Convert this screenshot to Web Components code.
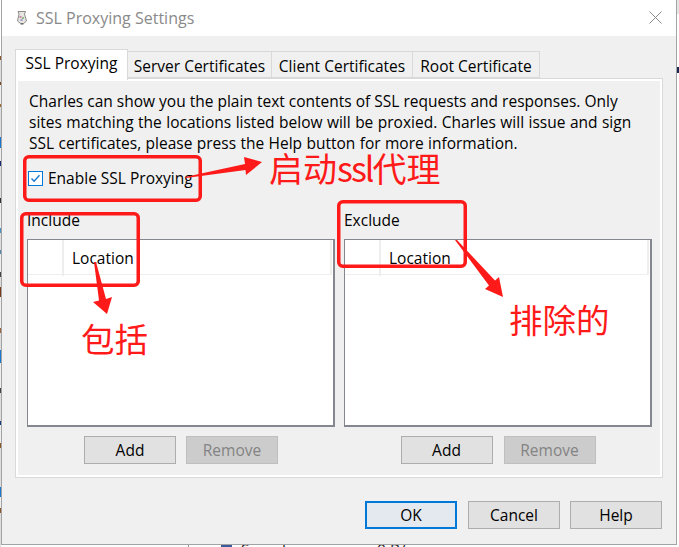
<!DOCTYPE html>
<html>
<head>
<meta charset="utf-8">
<title>SSL Proxying Settings</title>
<style>
    html, body { margin: 0; padding: 0; background: #fff; }
    body {
        position: relative;
        width: 679px;
        height: 547px;
        overflow: hidden;
        font-family: "Open Sans", "Noto Sans", sans-serif;
        font-size: 15.5px;
        color: #000;
    }
</style>
</head>
<body>
<ssl-backdrop></ssl-backdrop>
<ssl-dialog title-text="SSL Proxying Settings">
    <ssl-tabs>
        <ssl-tab slot="tabs" active style="width:113px">SSL Proxying</ssl-tab>
        <ssl-tab slot="tabs" style="width:144px">Server Certificates</ssl-tab>
        <ssl-tab slot="tabs" style="width:141px">Client Certificates</ssl-tab>
        <ssl-tab slot="tabs" style="width:127px">Root Certificate</ssl-tab>
        <ssl-proxy-panel></ssl-proxy-panel>
    </ssl-tabs>
    <ssl-button slot="footer" primary style="margin-right:1px">OK</ssl-button>
    <ssl-button slot="footer">Cancel</ssl-button>
    <ssl-button slot="footer">Help</ssl-button>
</ssl-dialog>
<ssl-markup></ssl-markup>

<script>
// what shows of the main window around the dialog
var templateBackdrop = document.createElement('template')
templateBackdrop.innerHTML = `
<style>
    :host {
        position: absolute;
        inset: 0;
        display: block;
    }
    #strip {
        position: absolute;
        left: 0;
        top: 0;
        width: 1px;
        height: 547px;
        background: linear-gradient(#fff 0 56px, #8a5a2a 56px 60px, #ddd 60px 82px, #7a4a20 82px 85px, #eee 85px 104px, #a06a30 104px 107px, #ddd 107px 137px, #1a78d0 137px 148px, #eee 148px 161px, #1a2a70 161px 166px, #ddd 166px 198px, #333 198px 203px, #eee 203px 228px, #4a90c0 228px 233px, #ddd 233px 250px, #58a 250px 254px, #eee 254px 272px, #444 272px 277px, #ddd 277px 287px, #7a3a1a 287px 297px, #eee 297px 328px, #964 328px 333px, #ddd 333px 350px, #1a78d0 350px 363px, #eee 363px 388px, #444 388px 393px, #ddd 393px 421px, #1a3a80 421px 425px, #eee 425px 443px, #8a5a2a 443px 448px, #ddd 448px 487px, #1a78d0 487px 497px, #eee 497px 508px, #8a5a2a 508px 513px, #ddd 513px);
    }
    #edge {
        position: absolute;
        right: 0;
        top: 0;
        width: 2px;
        height: 547px;
        background: linear-gradient(#e4e4e4 0 14px, #fff 14px 67px, #1a2a50 67px 73px, #fff 73px);
    }
    #under {
        position: absolute;
        left: 0;
        top: 539px;
        width: 679px;
        height: 8px;
        overflow: hidden;
        color: #222;
    }
    span, i { position: absolute; top: 0; }
    i { width: 1px; height: 8px; background: #999; }
    b { position: absolute; left: 221px; top: 0; width: 11px; height: 8px; background: #3a5a9a; }
</style>
<div id="strip"></div>
<div id="edge"></div>
<div id="under">
    <i style="left:188px"></i>
    <b></b>
    <span style="left:241px">Speed</span>
    <span style="left:377px">0 B/s</span>
</div>
`

class SslBackdrop extends HTMLElement {
    constructor() {
        super()
        this.shadow = this.attachShadow({ mode: 'open' })
        this.shadow.appendChild(templateBackdrop.content.cloneNode(true))
    }
}

var templateDialog = document.createElement('template')
templateDialog.innerHTML = `
<style>
    :host {
        position: relative;
        display: flex;
        flex-direction: column;
        box-sizing: border-box;
        width: 676px;
        height: 545px;
        margin-left: 1px;
        background: #f0f0f0;
        border: solid #a3a3a3;
        border-width: 0 1px 1px 1px;
    }
    #bar {
        display: flex;
        align-items: center;
        flex: none;
        box-sizing: border-box;
        height: 36px;
        padding: 0 0 1px 13px;
        background: #fff;
        color: #8a8a8a;
        font-size: 16px;
    }
    #bar svg.icon { flex: none; margin-right: 7px; }
    #bar span { flex: 1; }
    #bar svg.close { flex: none; margin-right: 14px; }
    #body { flex: none; padding: 13px 13px 0 13px; }
    #footer {
        display: flex;
        justify-content: flex-end;
        gap: 10px;
        padding: 23px 14px 0 0;
    }
</style>
<div id="bar">
    <svg class="icon" width="14" height="15" viewBox="0 0 14 15">
        <path d="M3 1.5h7.5L9.5 4l2 7-3 2.5h-3l-3-2.5 1.5-7z" fill="#e8e6e2" stroke="#8d8d88" stroke-width="1"/>
        <rect x="4.5" y="6" width="2" height="2" fill="#c88aa8"/>
        <rect x="7" y="7" width="2" height="2" fill="#8fb98c"/>
        <rect x="5.5" y="9" width="2" height="2" fill="#9a9ac8"/>
        <path d="M5.5 13.5h3v1h-3z" fill="#55554f"/>
    </svg>
    <span id="title"></span>
    <svg class="close" width="13" height="13" viewBox="0 0 13 13">
        <path d="M.5.5l12 12M12.5.5l-12 12" fill="none" stroke="#8c8c8c" stroke-width="1"/>
    </svg>
</div>
<div id="body"><slot></slot></div>
<div id="footer"><slot name="footer"></slot></div>
`

class SslDialog extends HTMLElement {
    constructor() {
        super()
        this.shadow = this.attachShadow({ mode: 'open' })
        this.shadow.appendChild(templateDialog.content.cloneNode(true))
    }

    connectedCallback() {
        this.shadow.querySelector('#title').textContent = this.getAttribute('title-text')
    }
}

var templateTabs = document.createElement('template')
templateTabs.innerHTML = `
<style>
    :host {
        display: block;
        width: 648px;
    }
    #strip {
        display: flex;
        align-items: flex-end;
        height: 30px;
        position: relative;
        z-index: 1;
    }
    #panel {
        box-sizing: border-box;
        height: 400px;
        margin-top: -1px;
        border: 1px solid #d9d9d9;
        outline: 2px solid #fff;
        outline-offset: -3px;
        padding: 2px;
    }
</style>
<div id="strip"><slot name="tabs"></slot></div>
<div id="panel"><slot></slot></div>
`

class SslTabs extends HTMLElement {
    constructor() {
        super()
        this.shadow = this.attachShadow({ mode: 'open' })
        this.shadow.appendChild(templateTabs.content.cloneNode(true))
    }
}

var templateTab = document.createElement('template')
templateTab.innerHTML = `
<style>
    :host {
        display: flex;
        align-items: center;
        justify-content: center;
        box-sizing: border-box;
        height: 27px;
        margin-bottom: 1px;
        padding-top: 2px;
        border: 1px solid #d9d9d9;
        border-left-width: 0;
        white-space: nowrap;
    }
    :host([active]) {
        height: 31px;
        margin-bottom: -1px;
        padding-top: 0;
        padding-bottom: 5px;
        border-left-width: 1px;
        border-bottom-width: 0;
        background: #fff;
    }
</style>
<slot></slot>
`

class SslTab extends HTMLElement {
    constructor() {
        super()
        this.shadow = this.attachShadow({ mode: 'open' })
        this.shadow.appendChild(templateTab.content.cloneNode(true))
    }
}

var templateButton = document.createElement('template')
templateButton.innerHTML = `
<style>
    :host {
        display: flex;
        align-items: center;
        justify-content: center;
        box-sizing: border-box;
        flex: none;
        width: 92px;
        height: 28px;
        background: #e1e1e1;
        border: 1px solid #adadad;
    }
    :host([disabled]) {
        background: #cccccc;
        border-color: #bfbfbf;
        color: #838383;
    }
    :host([primary]) {
        background: #e4e9ef;
        border: 2px solid #0078d7;
    }
</style>
<slot></slot>
`

class SslButton extends HTMLElement {
    constructor() {
        super()
        this.shadow = this.attachShadow({ mode: 'open' })
        this.shadow.appendChild(templateButton.content.cloneNode(true))
    }
}

var templateList = document.createElement('template')
templateList.innerHTML = `
<style>
    :host {
        display: block;
        width: 308px;
    }
    #label {
        height: 20px;
        line-height: 20px;
        margin-bottom: 9px;
    }
    #table {
        box-sizing: border-box;
        height: 188px;
        background: #fff;
        border: 1px solid #84878f;
        border-width: 1px 2px 2px 1px;
    }
    #head {
        display: grid;
        grid-template-columns: 36px 1fr;
        height: 35px;
        box-sizing: border-box;
        margin-right: 1px;
        border-bottom: 1px solid #eeeeee;
        border-right: 2px solid #eeeeee;
    }
    #blank { border-right: 2px solid #eeeeee; box-sizing: content-box; }
    #col {
        padding-left: 8px;
        line-height: 36px;
    }
    #buttons {
        display: flex;
        justify-content: center;
        gap: var(--gap, 10px);
        margin-top: 9px;
    }
</style>
<div id="label"></div>
<div id="table">
    <div id="head"><div id="blank"></div><div id="col">Location</div></div>
</div>
<div id="buttons">
    <ssl-button>Add</ssl-button>
    <ssl-button disabled>Remove</ssl-button>
</div>
`

class SslList extends HTMLElement {
    constructor() {
        super()
        this.shadow = this.attachShadow({ mode: 'open' })
        this.shadow.appendChild(templateList.content.cloneNode(true))
    }

    connectedCallback() {
        this.shadow.querySelector('#label').textContent = this.getAttribute('label')
    }
}

var templatePanel = document.createElement('template')
templatePanel.innerHTML = `
<style>
    :host {
        display: block;
        padding: 10px 9px 0 9px;
    }
    p {
        margin: 0 0 0 2px;
        line-height: 21px;
    }
    #enable {
        display: flex;
        align-items: center;
        gap: 5px;
        height: 24px;
        margin: 12px 0 20px 1px;
    }
    #box {
        display: block;
        flex: none;
        box-sizing: border-box;
        width: 15px;
        height: 15px;
        background: #fff;
        border: 1px solid #0078d7;
    }
    #lists {
        display: grid;
        grid-template-columns: 308px 308px;
        column-gap: 9px;
    }
</style>
<p>Charles can show you the plain text contents of SSL requests and responses. Only<br><span style="word-spacing:.43px">sites matching the locations listed below will be proxied. Charles will issue and sign</span><br><span style="word-spacing:.36px">SSL certificates, please press the Help button for more information.</span></p>
<div id="enable">
    <svg id="box" viewBox="0 0 13 13"><path d="M2.5 6.5l2.6 2.8 5.4-6" fill="none" stroke="#1a78d0" stroke-width="1.4"/></svg>
    <span>Enable SSL Proxying</span>
</div>
<div id="lists">
    <ssl-list label="Include"></ssl-list>
    <ssl-list label="Exclude" style="--gap:11px"></ssl-list>
</div>
`

class SslProxyPanel extends HTMLElement {
    constructor() {
        super()
        this.shadow = this.attachShadow({ mode: 'open' })
        this.shadow.appendChild(templatePanel.content.cloneNode(true))
    }
}

// the red notes somebody drew over the screenshot
var templateMarkup = document.createElement('template')
templateMarkup.innerHTML = `
<style>
    :host {
        position: absolute;
        inset: 0;
        display: block;
        pointer-events: none;
        color: #ff1a1a;
        font-family: "Noto Sans CJK SC", "Noto Sans", sans-serif;
    }
    svg { position: absolute; left: 0; top: 0; }
    span {
        position: absolute;
        white-space: nowrap;
        line-height: 34px;
    }
    em { font-style: normal; letter-spacing: -2px; }
</style>
<svg width="679" height="547" viewBox="0 0 679 547">
    <g fill="none" stroke="#ff1a1a" stroke-width="3.5">
        <rect x="24.75" y="156.75" width="175.5" height="43.5" rx="4"/>
        <rect x="21.75" y="213.75" width="116.5" height="71.5" rx="4"/>
        <rect x="338.75" y="201.75" width="126.5" height="64.5" rx="4"/>
    </g>
    <g fill="#ff1a1a">
        <polygon points="185,177 245,164 244,157 262,162 246,175 245.5,170 186,178"/>
        <polygon points="94,262 96,262 106,299 112,297 107,314 93,302 99,300.5"/>
        <polygon points="455,240 457,240 495,280.5 499,277 503,297 485,289 489,285.5"/>
    </g>
</svg>
<span style="left:269px;top:151px;font-size:34px">启动<em>ssl</em>代理</span>
<span style="left:81px;top:321px;font-size:33.5px">包括</span>
<span style="left:509px;top:302px;font-size:33.5px">排除的</span>
`

class SslMarkup extends HTMLElement {
    constructor() {
        super()
        this.shadow = this.attachShadow({ mode: 'open' })
        this.shadow.appendChild(templateMarkup.content.cloneNode(true))
    }
}

window.customElements.define('ssl-backdrop', SslBackdrop)
window.customElements.define('ssl-button', SslButton)
window.customElements.define('ssl-list', SslList)
window.customElements.define('ssl-proxy-panel', SslProxyPanel)
window.customElements.define('ssl-tab', SslTab)
window.customElements.define('ssl-tabs', SslTabs)
window.customElements.define('ssl-dialog', SslDialog)
window.customElements.define('ssl-markup', SslMarkup)
</script>
</body>
</html>
